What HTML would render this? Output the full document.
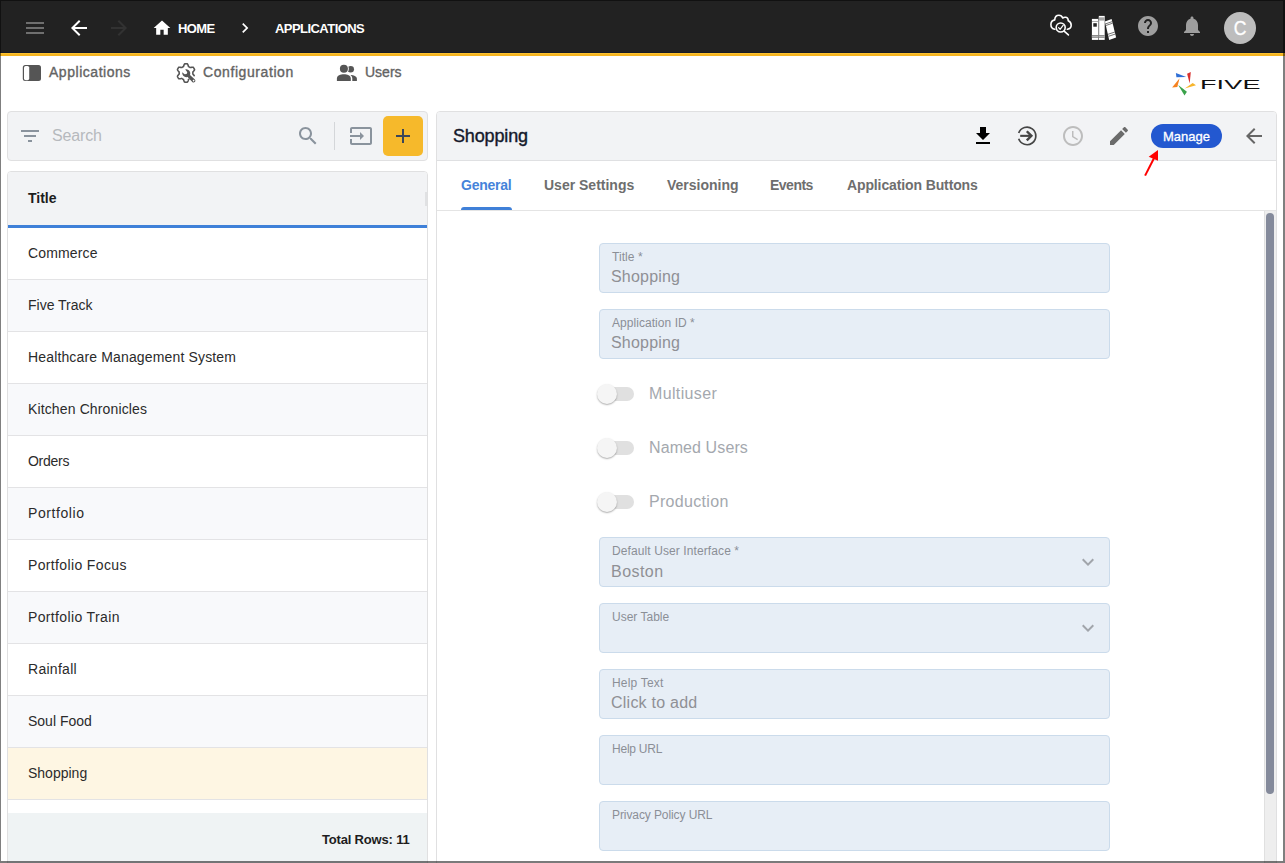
<!DOCTYPE html>
<html lang="en">
<head>
<meta charset="utf-8">
<title>Five - Applications</title>
<style>
*{box-sizing:border-box;margin:0;padding:0}
html,body{width:1285px;height:863px;overflow:hidden;background:#fff}
body{position:relative;font-family:"Liberation Sans",Arial,sans-serif;color:#222;-webkit-font-smoothing:antialiased}
.abs{position:absolute}
.t{position:absolute;white-space:nowrap;line-height:20px;height:20px}
svg{position:absolute;display:block;overflow:visible}

/* window frame */
#frame-l{left:0;top:1px;width:1px;height:860px;background:rgba(0,0,0,.5);z-index:50}
#frame-r{left:1283px;top:1px;width:2px;height:860px;background:rgba(0,0,0,.5);z-index:50}
#frame-b{left:0;top:861px;width:1285px;height:2px;background:rgba(0,0,0,.52);z-index:50}
#frame-t{left:0;top:0;width:1285px;height:1px;background:rgba(0,0,0,.5);z-index:50}

/* top bar */
#topbar{left:0;top:0;width:1285px;height:53px;background:#222222;border-bottom:1px solid #171b27}
#topline{left:0;top:53px;width:1285px;height:3px;background:#f5b521;border-top:1px solid #fdc22f}
.crumb{color:#fff;font-weight:bold;font-size:13px}

/* menu bar */
.menu{color:#636363;font-size:14px;-webkit-text-stroke:0.35px #636363}

/* panels */
.panel{background:#fff;border:1px solid #e0e0e1;border-radius:4px}
#searchbar{left:7px;top:111px;width:421px;height:50px;background:#f2f3f5}
#listpanel{left:7px;top:171px;width:421px;height:700px;background:#fff;border-radius:4px 4px 0 0;overflow:hidden}
#listhead{left:0;top:0;width:419px;height:53px;background:#f2f3f5}
#listline{left:0;top:53px;width:419px;height:3px;background:#3f80d8}
.row{position:absolute;left:0;width:419px;height:52px;border-bottom:1px solid #e3e3e5;background:#fff}
.row.alt{background:#f8f9fb}
.row.sel{background:#fef6e3}
.row span{position:absolute;left:20px;top:15px;line-height:20px;font-size:14px;color:#2b2b2b;white-space:nowrap}
#listfoot{left:0;top:641px;width:419px;height:60px;background:#eff3f4}

#detail{left:436px;top:111px;width:841px;height:760px;border-radius:4px 4px 0 0;overflow:hidden}
#dhead{left:0;top:0;width:839px;height:49px;background:#f2f3f5;border-bottom:1px solid #dfe0e2}
#tabline{left:0;top:98px;width:839px;height:1px;background:#e4e4e4}
.tab{color:#6e6e6e;font-weight:bold;font-size:14px}
#tabsel{left:24px;top:95px;width:51px;height:3px;background:#3f80d8;border-radius:3px 3px 0 0}

.field{position:absolute;left:599px;width:511px;height:50px;background:#e7eef6;border:1px solid #cbdbeb;border-radius:4px}
.field .lab{position:absolute;left:12px;top:3px;line-height:20px;font-size:12px;color:#8b8f96;white-space:nowrap}
.field .val{position:absolute;left:11px;top:22px;line-height:22px;font-size:16px;color:#8f9095;white-space:nowrap}
.sw-track{position:absolute;left:600px;width:34px;height:14px;border-radius:7px;background:#e0e0e0}
.sw-thumb{position:absolute;left:597px;width:20px;height:20px;border-radius:50%;background:#f5f5f5;box-shadow:0 1px 2px rgba(0,0,0,.24),0 1px 1px rgba(0,0,0,.1)}
.sw-lab{position:absolute;left:649px;line-height:22px;font-size:16px;color:#a4a8ae;white-space:nowrap}

#sb-track{left:1264px;top:211px;width:12px;height:652px;background:#eeeeee;border-left:1px solid #e0e0e0}
#sb-thumb{left:1266px;top:213px;width:8px;height:581px;border-radius:4px;background:#848a9b}
</style>
</head>
<body>

<!-- ================= TOP BAR ================= -->
<div id="topbar" class="abs"></div>
<div id="topline" class="abs"></div>

<!-- hamburger -->
<svg style="left:23px;top:16px" width="24" height="24" viewBox="0 0 24 24"><path fill="#6f6f6f" d="M3 18h18v-2H3v2zm0-5h18v-2H3v2zm0-7v2h18V6H3z"/></svg>
<!-- back -->
<svg style="left:67px;top:16px" width="24" height="24" viewBox="0 0 24 24"><path fill="#ffffff" d="M20 11H7.83l5.59-5.59L12 4l-8 8 8 8 1.41-1.41L7.83 13H20v-2z"/></svg>
<!-- forward (disabled) -->
<svg style="left:107px;top:16px" width="24" height="24" viewBox="0 0 24 24"><path fill="#323232" d="M12 4l-1.41 1.41L16.170 11H4v2h12.170l-5.580 5.590L12 20l8-8z"/></svg>
<!-- home -->
<svg style="left:152px;top:18px" width="20" height="20" viewBox="0 0 24 24"><path fill="#ffffff" d="M10 20v-6h4v6h5v-8h3L12 3 2 12h3v8z"/></svg>
<div class="t crumb" id="t-home" style="letter-spacing:-0.6px;left:178px;top:19px">HOME</div>
<!-- chevron -->
<svg style="left:235px;top:18px" width="20" height="20" viewBox="0 0 24 24"><path fill="#ffffff" d="M10 6L8.590 7.410 13.170 12l-4.580 4.590L10 18l6-6z"/></svg>
<div class="t crumb" id="t-apps" style="letter-spacing:-0.55px;left:275px;top:19px">APPLICATIONS</div>

<!-- right icons inserted later -->
<!-- cloud + magnifier/check -->
<svg style="left:1048px;top:12px" width="26" height="26" viewBox="1048 12 26 26" fill="none" stroke="#ffffff" stroke-width="1.600" stroke-linecap="round" stroke-linejoin="round">
  <path d="M1054.800 29.300 C1052.400 29 1050.900 27 1050.900 24.600 C1050.900 22.300 1052.500 20.400 1054.700 19.900 C1054.900 17.200 1056.600 15.300 1058.900 15.300 C1060.700 15.300 1062 16.300 1062.700 18 C1063.600 17.300 1064.800 17.100 1065.900 17.300 C1067.400 17.600 1068.300 19 1068.200 20.800 C1070.200 21.600 1071.200 23.400 1071.200 25.300 C1071.200 27.500 1069.600 29 1067.400 29.300"/>
  <circle cx="1060.700" cy="27.500" r="4.500"/>
  <path d="M1064.100 31.200 L1068.400 34.900"/>
  <path d="M1058.600 27.700 L1060.100 29.300 L1063.300 25.200" stroke-width="1.200"/>
</svg>
<!-- books -->
<svg style="left:1090px;top:14px" width="28" height="28" viewBox="1090 14 28 28">
  <rect x="1091.900" y="18.900" width="6.300" height="21" fill="#ffffff"/>
  <rect x="1091.900" y="21.100" width="6.300" height="0.600" fill="#7a7a7a"/>
  <rect x="1093.300" y="23.200" width="3.500" height="3.500" fill="#262626"/>
  <rect x="1091.900" y="35.100" width="6.300" height="2.600" fill="#6f6f6f"/>
  <rect x="1091.900" y="35.700" width="6.300" height="1.300" fill="#b4b4b4"/>
  <rect x="1098.200" y="20" width="0.600" height="19.900" fill="#777777"/>
  <rect x="1098.800" y="15.900" width="5.900" height="24" fill="#ffffff"/>
  <rect x="1098.800" y="17.300" width="5.900" height="3.300" fill="#a6a6a6"/>
  <rect x="1098.800" y="20.600" width="0.800" height="14.500" fill="#cfcfcf"/>
  <rect x="1098.800" y="35.100" width="5.900" height="2.600" fill="#6f6f6f"/>
  <rect x="1098.800" y="35.700" width="5.900" height="1.300" fill="#b4b4b4"/>
  <path d="M1104.900 21.400 L1111.600 19.100 L1116.100 37.600 L1109.200 39.900 Z" fill="#ffffff"/>
  <path d="M1105.500 23.900 L1112.200 21.600 M1105.900 25.500 L1112.600 23.200" stroke="#3a3a3a" stroke-width="0.700" fill="none"/>
  <path d="M1108 34.300 L1114.900 32 M1108.500 36.300 L1115.400 34" stroke="#3a3a3a" stroke-width="0.700" fill="none"/>
</svg>
<!-- help -->
<svg style="left:1136px;top:14px" width="24" height="24" viewBox="0 0 24 24"><path fill="#9e9e9e" d="M12 2C6.480 2 2 6.480 2 12s4.480 10 10 10 10-4.480 10-10S17.520 2 12 2zm1 17h-2v-2h2v2zm2.070-7.750l-.9.920C13.450 12.900 13 13.500 13 15h-2v-.5c0-1.100.45-2.100 1.170-2.830l1.240-1.260c.37-.36.590-.86.590-1.410 0-1.100-.9-2-2-2s-2 .9-2 2H8c0-2.210 1.790-4 4-4s4 1.790 4 4c0 .880-.36 1.680-.930 2.250z"/></svg>
<!-- bell -->
<svg style="left:1180px;top:14px" width="24" height="24" viewBox="0 0 24 24"><path fill="#9e9e9e" d="M12 22c1.100 0 2-.9 2-2h-4c0 1.100.890 2 2 2zm6-6v-5c0-3.070-1.640-5.640-4.500-6.320V4c0-.830-.67-1.500-1.500-1.500s-1.500.67-1.500 1.500v.680C7.630 5.360 6 7.920 6 11v5l-2 2v1h16v-1l-2-2z"/></svg>
<!-- avatar -->
<div class="abs" style="left:1224px;top:12px;width:32px;height:32px;border-radius:50%;background:#bdbdbd"></div>
<div class="t" id="t-avatar" style="left:1224px;top:16px;width:32px;text-align:center;font-size:19.500px;line-height:24px;height:24px;color:#ffffff;transform:scaleX(.9);-webkit-text-stroke:.35px #fff">C</div>


<!-- ================= MENU BAR ================= -->
<!-- applications icon -->
<svg style="left:22px;top:64px" width="20" height="18" viewBox="22 64 20 18">
  <rect x="22.800" y="64.900" width="18.200" height="16.200" rx="2.500" fill="#555555"/>
  <rect x="24" y="65.900" width="5.200" height="14.300" rx="1.700" fill="#ffffff"/>
</svg>
<!-- configuration icon: gear outline + wrench -->
<svg style="left:175px;top:62px" width="22" height="22" viewBox="175 62 22 22" fill="none" stroke="#555555" stroke-width="1.6" stroke-linejoin="round" stroke-linecap="round">
  <path d="M194.20 75.66 L193.91 75.26 L193.60 74.87 L193.28 74.52 L192.98 74.19 L192.84 73.91 L192.87 73.66 L192.89 73.41 L192.90 73.16 L192.90 72.91 L192.89 72.66 L192.87 72.41 L192.85 72.16 L192.89 71.90 L193.19 71.59 L193.50 71.24 L193.82 70.86 L194.11 70.46 L194.37 70.05 L194.56 69.63 L194.43 69.32 L194.29 69.01 L194.14 68.71 L193.98 68.42 L193.81 68.14 L193.63 67.86 L193.44 67.58 L193.23 67.32 L192.82 67.23 L192.33 67.24 L191.83 67.29 L191.35 67.37 L190.88 67.47 L190.46 67.57 L190.18 67.51 L189.98 67.36 L189.77 67.22 L189.56 67.09 L189.34 66.96 L189.12 66.85 L188.89 66.74 L188.66 66.64 L188.48 66.43 L188.35 66.00 L188.20 65.55 L188.03 65.09 L187.83 64.64 L187.59 64.21 L187.31 63.89 L186.97 63.85 L186.64 63.82 L186.31 63.81 L185.97 63.80 L185.64 63.81 L185.31 63.83 L184.97 63.86 L184.64 63.90 L184.37 64.28 L184.14 64.71 L183.94 65.16 L183.77 65.62 L183.63 66.07 L183.51 66.49 L183.30 66.65 L183.07 66.75 L182.85 66.86 L182.63 66.98 L182.41 67.11 L182.20 67.24 L181.99 67.38 L181.79 67.53 L181.48 67.55 L181.05 67.45 L180.58 67.35 L180.09 67.28 L179.60 67.23 L179.11 67.24 L178.73 67.36 L178.53 67.62 L178.34 67.90 L178.16 68.18 L177.99 68.47 L177.84 68.76 L177.69 69.06 L177.55 69.36 L177.46 69.69 L177.67 70.11 L177.93 70.53 L178.23 70.92 L178.55 71.30 L178.86 71.64 L179.15 71.95 L179.15 72.20 L179.12 72.45 L179.11 72.70 L179.10 72.95 L179.10 73.20 L179.11 73.45 L179.14 73.70 L179.17 73.95 L178.98 74.24 L178.67 74.57 L178.35 74.93 L178.04 75.32 L177.76 75.73 L177.53 76.15 L177.50 76.52 L177.63 76.82 L177.78 77.13 L177.93 77.42 L178.10 77.71 L178.27 77.99 L178.46 78.27 L178.66 78.54 L178.93 78.75 L179.41 78.77 L179.90 78.74 L180.39 78.68 L180.87 78.59 L181.32 78.49 L181.71 78.41 L181.91 78.56 L182.12 78.70 L182.33 78.84 L182.54 78.97 L182.76 79.09 L182.98 79.21 L183.21 79.31 L183.44 79.41 L183.58 79.76 L183.72 80.20 L183.87 80.66 L184.06 81.12 L184.28 81.56 L184.53 81.97 L184.85 82.13 L185.18 82.16 L185.51 82.19 L185.85 82.20 L186.18 82.20 L186.51 82.19 L186.85 82.16 L187.18 82.12 L187.49 81.94 L187.74 81.53 L187.96 81.09 L188.14 80.62 L188.30 80.17 L188.43 79.73 L188.58 79.40 L188.81 79.30"/>
  <path stroke="none" fill="#555555" fill-rule="evenodd" d="M185.300 69.400 C187 69 189.300 70 190 72 C190.400 73.200 190.300 74.200 190 74.900 L194.900 79.400 C195.600 80.200 195.500 81.300 194.800 82 C194 82.700 192.900 82.600 192.300 81.900 L187.600 77.100 C186.500 77.400 185.200 77.200 184.200 76.500 C182.800 75.600 182.100 74 182.200 72.200 L184.600 74.300 L186.600 74.100 L187.300 72.200 Z M193.600 79.800 a0.800 0.800 0 1 0 0.010 0 Z"/>
</svg>
<!-- users icon -->
<svg style="left:336px;top:63px" width="22" height="20" viewBox="336 63 22 20">
  <circle cx="350.700" cy="69.300" r="3.300" fill="#555555"/>
  <circle cx="343.900" cy="68.800" r="4.950" fill="#ffffff"/>
  <circle cx="343.900" cy="68.800" r="4" fill="#555555"/>
  <path fill="#555555" d="M336.900 80.900 V78.600 C336.900 75.600 340.500 74.300 343.900 74.300 C347.300 74.300 350.800 75.600 350.800 78.600 V80.900 Z"/>
  <path fill="#555555" d="M352.300 80.900 V78.500 C352.300 77 351.600 75.900 350.500 75 C353.500 75 356.900 76.300 356.900 78.600 V80.900 Z"/>
</svg>

<div class="t menu" id="t-m1" style="letter-spacing:0.53px;left:49px;top:62px">Applications</div>
<div class="t menu" id="t-m2" style="letter-spacing:0.58px;left:203px;top:62px">Configuration</div>
<div class="t menu" id="t-m3" style="left:365px;top:62px">Users</div>

<!-- logo inserted later -->
<!-- FIVE logo -->
<svg style="left:1170px;top:70px" width="92" height="28" viewBox="1170 70 92 28">
  <path fill="#2f6fd6" d="M1175.900 73.100 L1186.200 77.100 L1176.400 77.200 Z"/>
  <path fill="#d9312f" d="M1187.100 73.800 L1190.800 72 L1189.700 83.400 Z"/>
  <path fill="#f58220" d="M1179.600 78.200 L1172.100 87.600 L1177.300 87.100 Z"/>
  <path fill="#3aa24a" d="M1178.200 85 L1186.900 91.800 L1184.500 95.500 Z"/>
  <path fill="#f7b52c" d="M1184.800 88.500 L1192.700 82.900 L1196 85.200 Z"/>
  <text id="t-five" x="0" y="0" transform="translate(1199.900 88.500) scale(2.030 1)" font-family="Liberation Sans, Arial, sans-serif" font-size="13.3" fill="#111111" letter-spacing="0.1">FIVE</text>
</svg>


<!-- ================= LEFT: SEARCH BAR ================= -->
<div id="searchbar" class="abs panel"></div>
<div class="t" id="t-search" style="left:52px;top:125px;font-size:16px;line-height:22px;height:22px;color:#b6b9bd;letter-spacing:-0.15px">Search</div>
<!-- filter icon -->
<svg style="left:18px;top:124px" width="24" height="24" viewBox="0 0 24 24"><path fill="#8a939d" d="M10 18h4v-2h-4v2zM3 6v2h18V6H3zm3 7h12v-2H6v2z"/></svg>
<!-- search icon -->
<svg style="left:296px;top:124px" width="24" height="24" viewBox="0 0 24 24"><path fill="#8a939d" d="M15.500 14h-.79l-.28-.27C15.410 12.590 16 11.110 16 9.500 16 5.910 13.090 3 9.500 3S3 5.910 3 9.500 5.910 16 9.500 16c1.610 0 3.090-.59 4.230-1.570l.27.280v.790l5 4.990L20.490 19l-4.990-5zm-6 0C7.010 14 5 11.990 5 9.500S7.010 5 9.500 5 14 7.010 14 9.500 11.990 14 9.500 14z"/></svg>
<div class="abs" style="left:334px;top:122px;width:1px;height:28px;background:#d4d6d9"></div>
<!-- import icon -->
<svg style="left:349px;top:124px" width="24" height="24" viewBox="0 0 24 24"><path fill="#8a939d" d="M21 3.010H3c-1.100 0-2 .9-2 2V9h2V4.990h18v14.030H3V15H1v4.010c0 1.100.9 1.980 2 1.980h18c1.100 0 2-.880 2-1.980v-14c0-1.110-.9-2-2-2zM11 16l4-4-4-4v3H1v2h10v3z"/></svg>
<!-- add button -->
<div class="abs" style="left:383px;top:116px;width:40px;height:40px;border-radius:5px;background:#f6b92b"></div>
<svg style="left:391px;top:124px" width="24" height="24" viewBox="0 0 24 24"><path fill="#3b4658" d="M19 13h-6v6h-2v-6H5v-2h6V5h2v6h6v2z"/></svg>


<!-- ================= LEFT: LIST ================= -->
<div id="listpanel" class="abs panel">
  <div id="listhead" class="abs"></div>
  <div class="t" id="t-title" style="left:20px;top:16px;font-size:14px;font-weight:bold;color:#1d1d1d">Title</div>
  <div class="abs" style="left:417px;top:20px;width:2px;height:14px;background:#e0e1e3"></div>
  <div id="listline" class="abs"></div>
  <div class="row" style="top:56px"><span id="r0" style="letter-spacing:0.14px">Commerce</span></div>
  <div class="row alt" style="top:108px"><span id="r1">Five Track</span></div>
  <div class="row" style="top:160px"><span id="r2" style="letter-spacing:0.15px">Healthcare Management System</span></div>
  <div class="row alt" style="top:212px"><span id="r3" style="letter-spacing:0.13px">Kitchen Chronicles</span></div>
  <div class="row" style="top:264px"><span id="r4" style="letter-spacing:-0.28px">Orders</span></div>
  <div class="row alt" style="top:316px"><span id="r5" style="letter-spacing:0.57px">Portfolio</span></div>
  <div class="row" style="top:368px"><span id="r6" style="letter-spacing:0.36px">Portfolio Focus</span></div>
  <div class="row alt" style="top:420px"><span id="r7" style="letter-spacing:0.36px">Portfolio Train</span></div>
  <div class="row" style="top:472px"><span id="r8" style="letter-spacing:0.28px">Rainfall</span></div>
  <div class="row alt" style="top:524px"><span id="r9">Soul Food</span></div>
  <div class="row sel" style="top:576px"><span id="r10">Shopping</span></div>
  <div id="listfoot" class="abs"></div>
  <div class="t" id="t-total" style="letter-spacing:-0.18px;left:314px;top:658px;font-size:13px;font-weight:bold;color:#1d1d1d">Total Rows: 11</div>
</div>

<!-- ================= RIGHT: DETAIL ================= -->
<div id="detail" class="abs panel">
  <div id="dhead" class="abs"></div>
  <div class="t" id="t-shop" style="letter-spacing:-0.14px;left:16px;top:12px;font-size:18px;line-height:24px;height:24px;color:#15192b;-webkit-text-stroke:0.4px #15192b">Shopping</div>
  <div class="t tab" id="t-tab1" style="letter-spacing:-0.23px;left:24px;top:63px;color:#4583da">General</div>
  <div class="t tab" id="t-tab2" style="left:107px;top:63px">User Settings</div>
  <div class="t tab" id="t-tab3" style="left:230px;top:63px">Versioning</div>
  <div class="t tab" id="t-tab4" style="letter-spacing:-0.5px;left:333px;top:63px">Events</div>
  <div class="t tab" id="t-tab5" style="letter-spacing:-0.12px;left:410px;top:63px">Application Buttons</div>
  <div id="tabsel" class="abs"></div>
  <div id="tabline" class="abs"></div>
</div>
<!-- download -->
<svg style="left:971px;top:124px" width="24" height="24" viewBox="0 0 24 24"><path fill="#000000" d="M19 9h-4V3H9v6H5l7 7 7-7zM5 18v2h14v-2H5z"/></svg>
<!-- circle arrow -->
<svg style="left:1015px;top:124px" width="24" height="24" viewBox="1015 124 24 24" fill="none" stroke="#454545">
  <path d="M1018.700 133 A8.800 8.800 0 1 1 1018.700 138.800" stroke-width="1.700"/>
  <path d="M1020.200 135.850 H1031" stroke-width="2.100"/>
  <path d="M1026.800 131.250 L1031.400 135.850 L1026.800 140.450" stroke-width="2.400" stroke-linejoin="miter"/>
</svg>
<!-- clock (disabled) -->
<svg style="left:1061px;top:124px" width="24" height="24" viewBox="0 0 24 24"><path fill="#bdbdbd" d="M11.990 2C6.470 2 2 6.480 2 12s4.470 10 9.990 10C17.520 22 22 17.520 22 12S17.520 2 11.990 2zM12 20c-4.420 0-8-3.580-8-8s3.580-8 8-8 8 3.580 8 8-3.580 8-8 8zm.5-13H11v6l5.250 3.150.75-1.230-4.500-2.670z"/></svg>
<!-- pencil -->
<svg style="left:1107px;top:124px" width="24" height="24" viewBox="0 0 24 24"><path fill="#6b6b6b" d="M3 17.250V21h3.750L17.810 9.940l-3.750-3.750L3 17.250zM20.710 7.040c.39-.39.390-1.020 0-1.410l-2.340-2.340c-.39-.39-1.020-.39-1.410 0l-1.830 1.830 3.750 3.750 1.830-1.830z"/></svg>
<!-- manage button -->
<div class="abs" style="left:1151px;top:124px;width:71px;height:24px;border-radius:12px;background:#2358d0"></div>
<div class="t" id="t-manage" style="left:1151px;top:127px;width:71px;text-align:center;font-size:13px;color:#ffffff;-webkit-text-stroke:0.3px #ffffff">Manage</div>
<!-- back arrow -->
<svg style="left:1242px;top:124px" width="24" height="24" viewBox="0 0 24 24"><path fill="#666666" d="M20 11H7.830l5.590-5.590L12 4l-8 8 8 8 1.410-1.410L7.830 13H20v-2z"/></svg>
<!-- red annotation arrow -->
<svg style="left:1140px;top:148px" width="24" height="30" viewBox="1140 148 24 30">
  <path d="M1145.100 175.600 L1154.600 157" stroke="#ff0000" stroke-width="2" fill="none"/>
  <path d="M1158 150.100 L1148.700 156.800 L1158 160.800 Z" fill="#ff0000"/>
</svg>


<!-- form -->
<div class="field" style="top:243px"><span class="lab" id="l1" style="letter-spacing:0.08px">Title *</span><span class="val" id="v1" style="letter-spacing:0.2px">Shopping</span></div>
<div class="field" style="top:309px"><span class="lab" id="l2" style="letter-spacing:0.05px">Application ID *</span><span class="val" id="v2" style="letter-spacing:0.2px">Shopping</span></div>

<div class="sw-track" style="top:387px"></div><div class="sw-thumb" style="top:384px"></div><div class="sw-lab" id="s1" style="letter-spacing:0.35px;top:383px">Multiuser</div>
<div class="sw-track" style="top:441px"></div><div class="sw-thumb" style="top:438px"></div><div class="sw-lab" id="s2" style="letter-spacing:0.1px;top:437px">Named Users</div>
<div class="sw-track" style="top:495px"></div><div class="sw-thumb" style="top:492px"></div><div class="sw-lab" id="s3" style="letter-spacing:0.31px;top:491px">Production</div>

<div class="field" style="top:537px"><span class="lab" id="l3" style="letter-spacing:0.1px">Default User Interface *</span><span class="val" id="v3" style="letter-spacing:0.46px;top:23px">Boston</span></div>
<div class="field" style="top:603px"><span class="lab" id="l4">User Table</span></div>
<div class="field" style="top:669px"><span class="lab" id="l5" style="letter-spacing:0.2px">Help Text</span><span class="val" id="v5" style="letter-spacing:0.24px">Click to add</span></div>
<div class="field" style="top:735px"><span class="lab" id="l6" style="letter-spacing:-0.23px">Help URL</span></div>
<div class="field" style="top:801px"><span class="lab" id="l7" style="letter-spacing:-0.09px">Privacy Policy URL</span></div>
<svg style="left:1076px;top:550px" width="24" height="24" viewBox="0 0 24 24"><path fill="#a1a5ab" d="M16.590 8.590L12 13.170 7.410 8.590 6 10l6 6 6-6z"/></svg>
<svg style="left:1076px;top:616px" width="24" height="24" viewBox="0 0 24 24"><path fill="#a1a5ab" d="M16.590 8.590L12 13.170 7.410 8.590 6 10l6 6 6-6z"/></svg>


<!-- scrollbar -->
<div id="sb-track" class="abs"></div>
<div id="sb-thumb" class="abs"></div>

<!-- window frame -->
<div id="frame-t" class="abs"></div>
<div id="frame-l" class="abs"></div>
<div id="frame-r" class="abs"></div>
<div id="frame-b" class="abs"></div>
</body>
</html>
